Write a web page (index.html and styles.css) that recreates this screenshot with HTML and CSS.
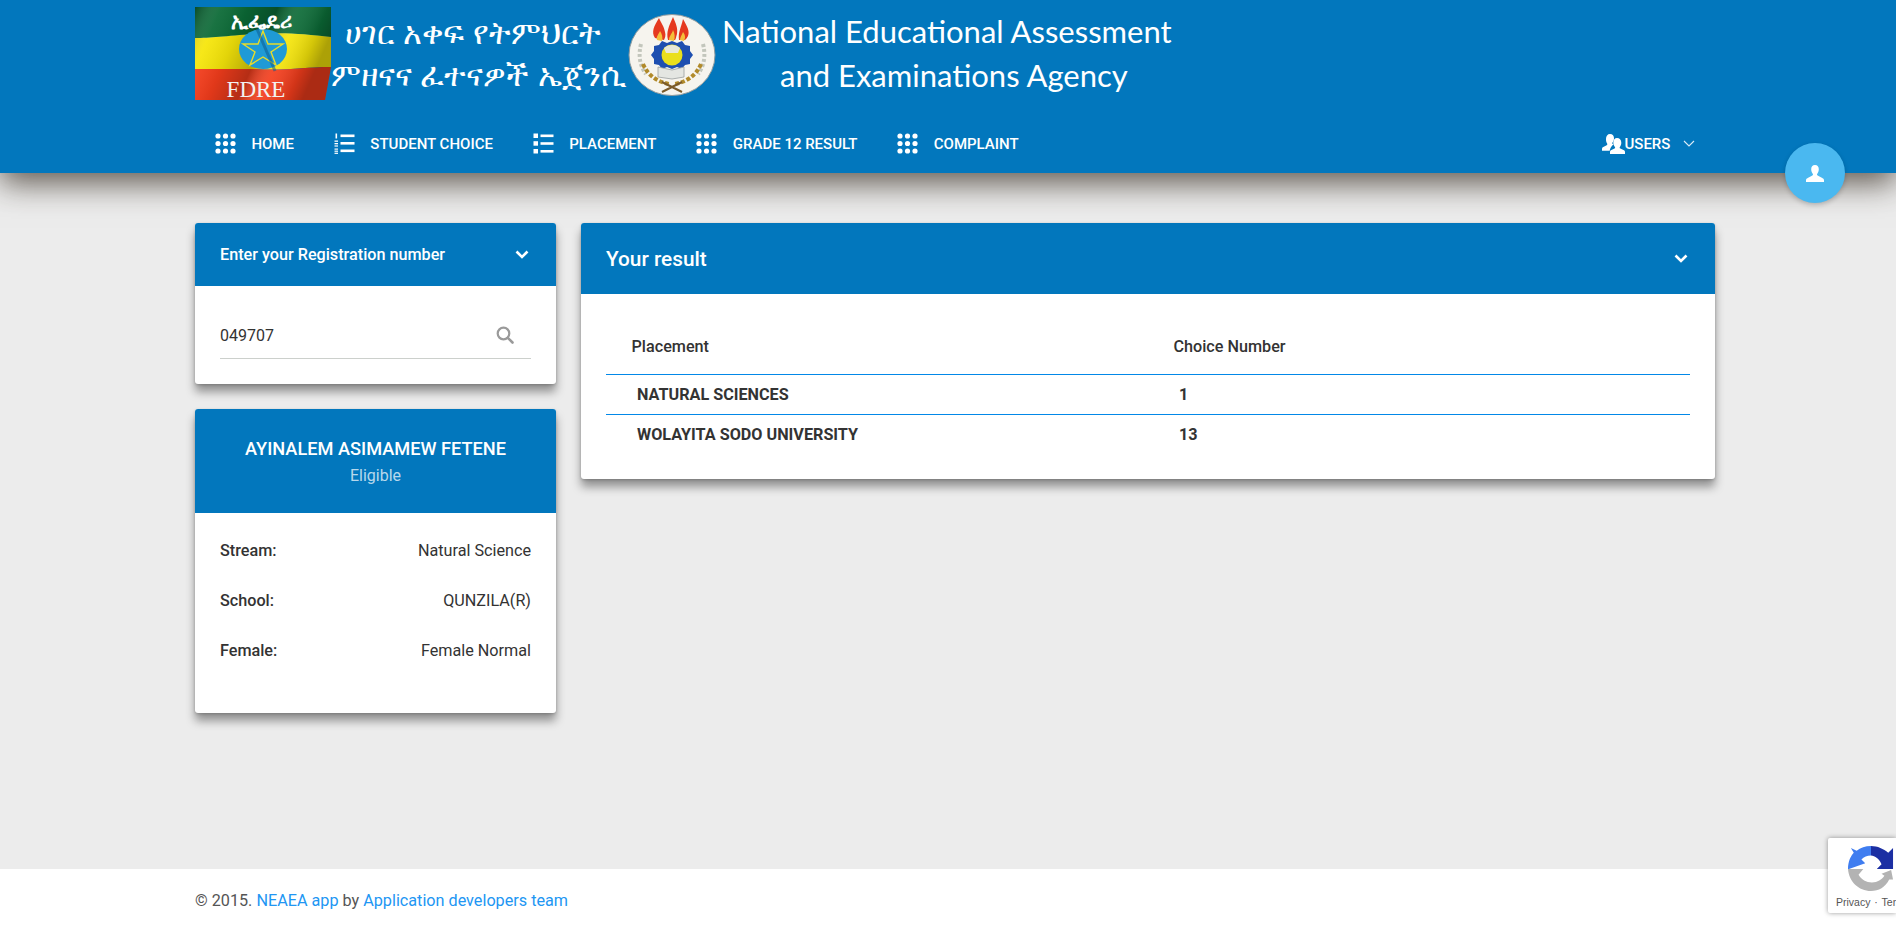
FILE: index.html
```html
<!DOCTYPE html>
<html lang="en">
<head>
<meta charset="utf-8">
<title>NEAEA</title>
<link rel="stylesheet" href="styles.css">
</head>
<body>
<svg class="defs" width="0" height="0" aria-hidden="true">
  <defs>
    <symbol id="i-grid" viewBox="0 0 21 21">
      <g fill="#fff">
        <circle cx="3" cy="3" r="2.6"/><circle cx="10.5" cy="3" r="2.6"/><circle cx="18" cy="3" r="2.6"/>
        <circle cx="3" cy="10.5" r="2.6"/><circle cx="10.5" cy="10.5" r="2.6"/><circle cx="18" cy="10.5" r="2.6"/>
        <circle cx="3" cy="18" r="2.6"/><circle cx="10.5" cy="18" r="2.6"/><circle cx="18" cy="18" r="2.6"/>
      </g>
    </symbol>
    <symbol id="i-num" viewBox="0 0 21 21">
      <g fill="#fff">
        <rect x="6.5" y="1.5" width="14" height="2.6"/><rect x="6.5" y="9" width="14" height="2.6"/><rect x="6.5" y="16.5" width="14" height="2.6"/>
        <rect x="1.5" y="0.5" width="1.6" height="5"/><rect x="0.5" y="7.5" width="3.5" height="1.3"/><rect x="0.5" y="10" width="3.5" height="1.3"/><rect x="0.5" y="12.4" width="3.5" height="1.2"/>
        <rect x="0.5" y="15.5" width="3.5" height="1.2"/><rect x="0.5" y="17.6" width="3.5" height="1.2"/><rect x="0.5" y="19.7" width="3.5" height="1.2"/>
      </g>
    </symbol>
    <symbol id="i-list" viewBox="0 0 21 21">
      <g fill="#fff">
        <rect x="0.5" y="0.5" width="4.5" height="4.5"/><rect x="0.5" y="8.2" width="4.5" height="4.5"/><rect x="0.5" y="16" width="4.5" height="4.5"/>
        <rect x="7.5" y="1.5" width="13" height="2.6"/><rect x="7.5" y="9.2" width="13" height="2.6"/><rect x="7.5" y="17" width="13" height="2.6"/>
      </g>
    </symbol>
    <symbol id="i-chev" viewBox="0 0 14 9">
      <path d="M1.5 1.5 7 7l5.5-5.5" fill="none" stroke="#fff" stroke-width="2.6"/>
    </symbol>
  </defs>
</svg>

<header class="topbar">
  <div class="banner">
    <svg class="flag" viewBox="0 0 136 93" role="img" aria-label="FDRE flag">
      <defs>
        <linearGradient id="fold" x1="0" x2="1" y1="0" y2="0.3">
          <stop offset="0" stop-color="#000" stop-opacity=".3"/>
          <stop offset=".18" stop-color="#fff" stop-opacity=".06"/>
          <stop offset=".36" stop-color="#000" stop-opacity=".08"/>
          <stop offset=".56" stop-color="#000" stop-opacity=".26"/>
          <stop offset=".72" stop-color="#fff" stop-opacity=".08"/>
          <stop offset=".9" stop-color="#000" stop-opacity=".14"/>
          <stop offset="1" stop-color="#000" stop-opacity=".3"/>
        </linearGradient>
      </defs>
      <path d="M0 0H136V30C110 27 90 25 60 27C30 29 15 31 0 31Z" fill="#0b6a36"/>
      <path d="M0 31C15 31 30 29 60 27C90 25 110 27 136 30V60C110 60 90 64 60 62C30 62 15 62 0 62Z" fill="#f6e60a"/>
      <path d="M0 62C15 62 30 62 60 62C90 64 110 60 136 60L130 93H0Z" fill="#f43d1c"/>
      <path d="M0 0H136V60L130 93H0Z" fill="url(#fold)"/>
      <ellipse cx="68" cy="42" rx="24" ry="20" fill="#1f9ad6"/>
      <path d="M68 24 73 37 88 37 76 45 81 58 68 50 55 58 60 45 48 37 63 37Z" fill="none" stroke="#e8dc2a" stroke-width="1.4"/>
      <path d="M62 22 80 64" stroke="#0d5d90" stroke-width="3" opacity=".55"/>
      <text x="66" y="21" class="flag-am">ኢፌዴሪ</text>
      <text x="61" y="90" class="flag-en">FDRE</text>
    </svg>
    <div class="banner-am">
      <span class="am-one">ሀገር አቀፍ የትምህርት</span>
      <span class="am-two">ምዘናና ፈተናዎች ኤጀንሲ</span>
    </div>
    <svg class="emblem" viewBox="0 0 88 82" role="img" aria-label="NEAEA emblem">
      <ellipse cx="44" cy="41" rx="43" ry="40.5" fill="#f6f4ee" stroke="#8e9a9e" stroke-width="1"/>
      <path d="M27 24C23 18 26 12 31 4 33 9 36 12 37 18 38 21 37 24 36 26Z" fill="#e5391f"/>
      <path d="M40 26C38 18 41 12 45 3 48 10 50 14 49 20 48 23 48 25 47 26Z" fill="#e5391f"/>
      <path d="M51 26C50 18 53 14 55 5 59 12 62 17 60 22 59 24 58 25 57 26Z" fill="#e5391f"/>
      <path d="M29 26C28 22 31 20 32 17 34 20 35 23 34 27ZM41 26C41 22 44 20 45 16 47 20 47 23 46 27ZM52 26C52 23 54 21 55 18 57 21 58 23 56 27Z" fill="#f4bf3a"/>
      <path d="M44 27 49 29 54 27 57 31 62 32 62 37 65 41 62 45 62 50 57 51 54 55 49 53 44 55 39 53 34 55 31 51 26 50 26 45 23 41 26 37 26 32 31 31 34 27 39 29Z" fill="#1e4fb0"/>
      <circle cx="44" cy="41" r="10.500" fill="#eadf1c"/>
      <path d="M36 34C40 30 48 30 52 34L50 39H38Z" fill="#e8e8d8"/>
      <path d="M13 30C10 42 12 52 18 60" fill="none" stroke="#c3c6bc" stroke-width="4" stroke-dasharray="3 2"/>
      <path d="M75 30C78 42 76 52 70 60" fill="none" stroke="#c3c6bc" stroke-width="4" stroke-dasharray="3 2"/>
      <path d="M15 50C20 62 30 68 41 70" fill="none" stroke="#b18a2a" stroke-width="4" stroke-dasharray="4 2"/>
      <path d="M73 50C68 62 58 68 47 70" fill="none" stroke="#b18a2a" stroke-width="4" stroke-dasharray="4 2"/>
      <path d="M30 53 44 56 56 53V63L44 65 30 63Z" fill="#e4e6e2" stroke="#9aa0a0" stroke-width=".8"/>
      <path d="M34 78 54 68M54 78 34 68" stroke="#7a5a2a" stroke-width="2"/>
    </svg>
    <div class="banner-en">
      <span class="en-one">National Educational Assessment</span>
      <span class="en-two">and Examinations Agency</span>
    </div>
  </div>

  <nav class="navrow">
    <ul class="navlist">
      <li class="navitem"><svg class="navicon"><use href="#i-grid"/></svg>Home</li>
      <li class="navitem"><svg class="navicon"><use href="#i-num"/></svg>Student Choice</li>
      <li class="navitem"><svg class="navicon"><use href="#i-list"/></svg>Placement</li>
      <li class="navitem"><svg class="navicon"><use href="#i-grid"/></svg>Grade 12 Result</li>
      <li class="navitem"><svg class="navicon"><use href="#i-grid"/></svg>Complaint</li>
    </ul>
    <div class="usermenu">
      <svg class="usersicon" viewBox="0 0 23 20" aria-hidden="true">
        <path fill="#fff" d="M8 0c2.6 0 4.2 1.9 4 4.6-.1 1.6-.7 3-1.5 4-.4.6-.3 1.2.3 1.5l.7.4c-.9.6-2 1.7-2.8 3.2-.5 1-.9 2.100-1 3H0v-1.600c0-.9.500-1.700 1.300-2.100l3.400-1.800c.7-.4.800-1 .4-1.600C4.300 8.300 4 7 4 5 4 2 5.500 0 8 0Z"/>
        <path fill="#fff" d="M15 4c2.500 0 4.300 2 4.300 4.800 0 1.600-.6 3.100-1.400 4.100-.5.7-.3 1.300.4 1.600l3.200 1.600c.8.400 1.500 1.100 1.500 2V20H8v-1.900c0-.9.600-1.600 1.400-2l3.100-1.600c.7-.3.800-.900.400-1.600-.9-1.100-1.600-2.500-1.600-4.100C11.300 6 12.800 4 15 4Z"/>
      </svg>
      <span class="userslabel">Users</span>
      <svg class="thinchev" viewBox="0 0 12 7" aria-hidden="true"><path d="M1 1l5 5 5-5" fill="none" stroke="#dcecf7" stroke-width="1.100"/></svg>
    </div>
  </nav>
  <button class="fab" type="button" aria-label="User">
    <svg viewBox="0 0 18 17" width="18" height="17"><path fill="#fff" d="M9 0c2.600 0 3.800 1.900 3.800 4.300 0 1.800-.7 3.400-1.500 4.400-.5.700-.4 1.300.3 1.700l4.700 2.600c.9.500 1.700 1.100 1.700 2V17H0v-2c0-.9.800-1.500 1.700-2l4.700-2.600c.7-.4.800-1 .3-1.700-.8-1-1.500-2.600-1.500-4.400C5.200 1.900 6.400 0 9 0Z"/></svg>
  </button>
</header>

<main class="content">
  <aside class="sidecol">
    <section class="card">
      <div class="cardhead smallhead">
        <span class="smalltitle">Enter your Registration number</span>
        <svg class="chev"><use href="#i-chev"/></svg>
      </div>
      <div class="searchbody">
        <div class="searchfield">
          <span class="searchvalue">049707</span>
          <svg class="searchicon" viewBox="0 0 18 18" aria-hidden="true">
            <circle cx="7.500" cy="7.500" r="5.800" fill="none" stroke="#9a9a9a" stroke-width="2.200"/>
            <path d="M11.800 11.800 16.500 16.500" stroke="#9a9a9a" stroke-width="2.600" stroke-linecap="round"/>
          </svg>
        </div>
      </div>
    </section>

    <section class="card">
      <div class="profilehead">
        <h2 class="profilename">AYINALEM ASIMAMEW FETENE</h2>
        <div class="profilestate">Eligible</div>
      </div>
      <dl class="facts">
        <div class="fact"><dt>Stream:</dt><dd>Natural Science</dd></div>
        <div class="fact"><dt>School:</dt><dd>QUNZILA(R)</dd></div>
        <div class="fact"><dt>Female:</dt><dd>Female Normal</dd></div>
      </dl>
    </section>
  </aside>

  <section class="card resultcard">
    <div class="cardhead largehead">
      <span class="largetitle">Your result</span>
      <svg class="chev"><use href="#i-chev"/></svg>
    </div>
    <div class="resultbody">
      <table class="resulttable">
        <thead>
          <tr><th>Placement</th><th>Choice Number</th></tr>
        </thead>
        <tbody>
          <tr><td>NATURAL SCIENCES</td><td>1</td></tr>
          <tr><td>WOLAYITA SODO UNIVERSITY</td><td>13</td></tr>
        </tbody>
      </table>
    </div>
  </section>
</main>

<footer class="pagefoot">
  © 2015. <a class="footlink">NEAEA app</a> by <a class="footlink">Application developers team</a>
</footer>

<div class="recaptcha">
  <svg class="rc-logo" viewBox="0 0 48 48" aria-hidden="true">
    <path fill="#3f7df0" d="M24 0V10C20 10 16.500 11.500 14 14L18 18 1 24H0C0 16 3 10 6 7L3 2 9 5C13 2 18 0 24 0Z"/>
    <path fill="#1c2fa3" d="M24 0C31 0 37 3 42 7L47 2V24H30L35 19C33 14 28 10 24 10Z"/>
    <path fill="#b3b3b3" d="M0 24H12L16 24 11 30C14 35 19 38 25 38 31 38 35 35 38 31L35 29 45 25 47 35 43 35C39 43 32 47 24 47 11 47 1 37 0 24Z"/>
  </svg>
  <div class="rc-links">Privacy <span class="rc-dot">·</span> Terms</div>
</div>
</body>
</html>
```
FILE: styles.css
```css
* { box-sizing: border-box; }

html, body {
  margin: 0;
  height: 930px;
  overflow: hidden;
}

body {
  position: relative;
  display: flex;
  flex-direction: column;
  background: #ececec;
  font-family: Roboto, "Noto Sans", sans-serif;
  color: #333;
}

.defs { position: absolute; }

.topbar {
  position: relative;
  z-index: 2;
  height: 173px;
  padding: 7px 181px 0 195px;
  background: #0277bd;
  box-shadow: 0 10px 30px rgba(40, 30, 20, .72);
}

.banner {
  display: flex;
  align-items: flex-start;
  height: 93px;
}

.flag { width: 136px; height: 93px; flex: none; overflow: visible; }
.flag-am { font: 700 21px "Noto Sans", "DejaVu Sans", sans-serif; fill: #fff; text-anchor: middle; }
.flag-en { font: 400 23px "Liberation Serif", serif; fill: #f2f2f2; text-anchor: middle; }

.banner-am {
  width: 297px;
  flex: none;
  display: flex;
  flex-direction: column;
  color: #fff;
  font-family: "Noto Sans", "DejaVu Sans", sans-serif;
  font-size: 32.4px;
  white-space: nowrap;
}
.am-one { line-height: 42px; margin: 3px 0 0 14px; }
.am-two { line-height: 42px; }

.emblem { width: 88px; height: 82px; flex: none; margin-top: 7px; }

.banner-en {
  flex: none;
  display: flex;
  flex-direction: column;
  align-items: flex-start;
  margin-left: 6px;
  color: #fff;
  font-family: Lato, sans-serif;
  font-size: 31px;
  white-space: nowrap;
}
.en-one { line-height: 40px; margin-top: 4px; }
.en-two { line-height: 46px; margin-left: 58px; margin-top: 1px; }

.navrow {
  display: flex;
  align-items: center;
  justify-content: space-between;
  height: 73px;
  margin-top: 7px;
}

.navlist {
  display: flex;
  list-style: none;
  margin: 0;
  padding: 0;
}

.navitem {
  display: flex;
  align-items: center;
  padding: 0 20px;
  color: #fff;
  font-size: 15px;
  font-weight: 500;
  text-transform: uppercase;
  white-space: nowrap;
}

.navicon { width: 21px; height: 21px; margin-right: 15.4px; flex: none; }

.usermenu {
  display: flex;
  align-items: center;
  margin-right: 20px;
  color: #fff;
  font-size: 15px;
  font-weight: 500;
  text-transform: uppercase;
}
.usersicon { width: 23px; height: 20px; }
.userslabel { margin: 0 12.6px 0 -0.4px; }
.thinchev { width: 12px; height: 7px; }

.fab {
  position: absolute;
  right: 51px;
  top: 143px;
  width: 60px;
  height: 60px;
  display: flex;
  align-items: center;
  justify-content: center;
  padding: 0;
  border: 0;
  border-radius: 50%;
  background: #4ab8f0;
  box-shadow: 0 2px 5px rgba(0, 0, 0, .2);
}

.content {
  flex: 1;
  display: flex;
  align-items: flex-start;
  gap: 25px;
  padding: 50px 181px 0 195px;
}

.sidecol {
  width: 361px;
  flex: none;
  display: flex;
  flex-direction: column;
  gap: 25px;
}

.card {
  background: #fff;
  border-radius: 3px;
  overflow: hidden;
  box-shadow: 0 8px 10px rgba(0, 0, 0, .38), 0 1px 3px rgba(0, 0, 0, .2);
}

.cardhead {
  display: flex;
  align-items: center;
  justify-content: space-between;
  background: #0277bd;
  color: #fff;
}

.smallhead { height: 63px; padding: 0 27px 0 25px; }
.smalltitle { font-size: 16.2px; font-weight: 500; }
.chev { width: 14px; height: 9px; flex: none; }

.searchbody { height: 98px; padding: 25px 25px 0; }
.searchfield {
  display: flex;
  align-items: center;
  justify-content: space-between;
  height: 48px;
  padding-right: 17px;
  border-bottom: 1px solid #ccd0cc;
}
.searchvalue { font-size: 16px; color: #333; padding-top: 2px; }
.searchicon { width: 18px; height: 18px; }

.profilehead {
  height: 104px;
  padding-top: 27px;
  background: #0277bd;
  color: #fff;
  text-align: center;
}
.profilename {
  margin: 0;
  font-size: 18.2px;
  font-weight: 500;
  line-height: 26px;
}
.profilestate {
  font-size: 16px;
  line-height: 24px;
  margin-top: 2px;
  color: rgba(255, 255, 255, .72);
}

.facts {
  display: flex;
  flex-direction: column;
  gap: 30px;
  height: 200px;
  margin: 0;
  padding: 28px 25px 0;
}
.fact {
  display: flex;
  justify-content: space-between;
  line-height: 20px;
  font-size: 16.2px;
}
.fact dt { font-weight: 500; }
.fact dd { margin: 0; }

.resultcard { flex: 1; }
.largehead { height: 71px; padding: 0 27px 0 25px; }
.largetitle { font-size: 20.8px; font-weight: 500; }

.resultbody { height: 185px; padding: 25px 25px 0; }
.resulttable {
  width: 100%;
  border-collapse: collapse;
  table-layout: fixed;
}
.resulttable th {
  height: 55px;
  padding: 0 0 0 25.5px;
  text-align: left;
  font-size: 16.2px;
  font-weight: 500;
  border-bottom: 1px solid #0288e8;
}
.resulttable td {
  height: 40px;
  padding: 0 0 0 31px;
  font-size: 16.2px;
  font-weight: 700;
  color: #333;
}
.resulttable tbody tr:first-child td { border-bottom: 1px solid #0288e8; }

.pagefoot {
  height: 61px;
  padding: 22px 0 0 195px;
  background: #fff;
  font-size: 16.2px;
  line-height: 20px;
  color: #555;
}
.footlink { color: #2196f3; }

.recaptcha {
  position: absolute;
  left: 1828px;
  top: 838px;
  width: 68px;
  height: 75px;
  padding: 8px 0 0 0;
  overflow: hidden;
  background: #fff;
  border-radius: 2px 0 0 2px;
  box-shadow: 0 0 5px rgba(0, 0, 0, .4);
  font-family: "Liberation Sans", sans-serif;
}
.rc-logo { display: block; width: 46px; height: 46px; margin-left: 20px; }
.rc-links { margin: 4px 0 0 8px; font-size: 10.500px; color: #555; white-space: nowrap; }
.rc-dot { margin: 0 1px; }
```
